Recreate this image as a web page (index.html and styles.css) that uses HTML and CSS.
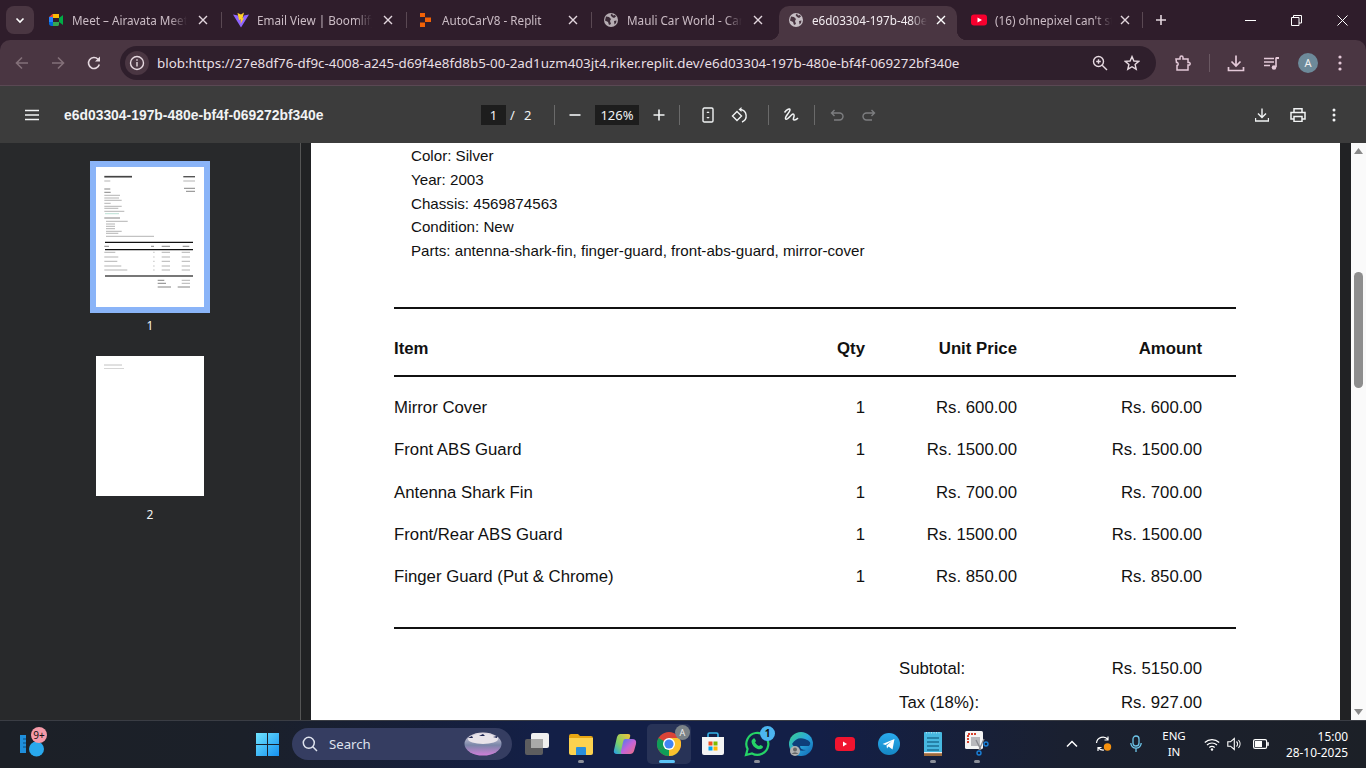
FILE: index.html
```html
<!DOCTYPE html>
<html lang="en">
<head>
<meta charset="utf-8">
<title>e6d03304-197b-480e-bf4f-069272bf340e</title>
<link rel="stylesheet" href="styles.css">
</head>
<body>
<div class="screen">
  <header class="tabstrip">
    <button class="tabsearch"><svg width="12" height="12" viewBox="0 0 12 12"><path d="M2.500 4.500 6 8l3.500-3.500" fill="none" stroke="#fff" stroke-width="1.600"/></svg></button>
    <div class="tab">
      <svg class="fav" width="16" height="16" viewBox="0 0 16 16"><path d="M1 5 4.500 2H11v4H5v4H1z" fill="#ea4335"/><path d="M1 5h4v6H1z" fill="#2684fc"/><path d="M5 2h6v4H5z" fill="#fbbc04"/><path d="M1 10h4v4H3.500C2 14 1 13 1 11.500z" fill="#0066da"/><path d="M5 10h6v2.500C11 13.500 10 14 9 14H5z" fill="#34a853"/><path d="M11 6 15 3v10l-4-3z" fill="#00ac47"/></svg>
      <span class="tabtext">Meet – Airavata Meet</span>
      <svg class="x" width="10" height="10" viewBox="0 0 10 10"><path d="M1 1l8 8M9 1 1 9" stroke="#e3d6de" stroke-width="1.400"/></svg>
    </div>
    <div class="tab">
      <svg class="fav" width="16" height="16" viewBox="0 0 16 16"><path d="M0 2.500 8 15.500 16 2.500 11 3.500 8 8.500 5 3.500z" fill="#8f65ff"/><path d="M4.500 1 8 2.500 11 .5 9.500 6.500 11 6 7.500 12 8 7.500 6 8z" fill="#ffd028"/></svg>
      <span class="tabtext">Email View | Boomlify</span>
      <svg class="x" width="10" height="10" viewBox="0 0 10 10"><path d="M1 1l8 8M9 1 1 9" stroke="#e3d6de" stroke-width="1.400"/></svg>
    </div>
    <div class="tab">
      <svg class="fav" width="16" height="16" viewBox="0 0 16 16"><path d="M2 1h5v4H2zM7 5.500h6v4.500H7zM2 10.500h5V15H2z" fill="#f26207"/></svg>
      <span class="tabtext">AutoCarV8 - Replit</span>
      <svg class="x" width="10" height="10" viewBox="0 0 10 10"><path d="M1 1l8 8M9 1 1 9" stroke="#e3d6de" stroke-width="1.400"/></svg>
    </div>
    <div class="tab tab-plain">
      <svg class="fav" width="16" height="16" viewBox="0 0 16 16"><circle cx="8" cy="8" r="7" fill="#b6adb3"/><path d="M3 4.500l3 .5 2 2-1 2 1 3-2 1-1-3-3-1.500zM9 1.500l1 2 2-.5 1 1.500-2 1.500-2-1-1.500-2zM11 9l2.500-.5-.5 2.500-1.500 1.500z" fill="#3a2a36"/></svg>
      <span class="tabtext">Mauli Car World - Car</span>
      <svg class="x" width="10" height="10" viewBox="0 0 10 10"><path d="M1 1l8 8M9 1 1 9" stroke="#e3d6de" stroke-width="1.400"/></svg>
    </div>
    <div class="tab tab-active">
      <svg class="fav" width="16" height="16" viewBox="0 0 16 16"><circle cx="8" cy="8" r="7" fill="#c8c0c6"/><path d="M3 4.500l3 .5 2 2-1 2 1 3-2 1-1-3-3-1.500zM9 1.500l1 2 2-.5 1 1.500-2 1.500-2-1-1.500-2zM11 9l2.500-.5-.5 2.500-1.500 1.500z" fill="#4a3642"/></svg>
      <span class="tabtext">e6d03304-197b-480e-bf4f</span>
      <svg class="x" width="10" height="10" viewBox="0 0 10 10"><path d="M1 1l8 8M9 1 1 9" stroke="#fff" stroke-width="1.400"/></svg>
    </div>
    <div class="tab tab-last">
      <svg class="fav" width="16" height="16" viewBox="0 0 16 16"><rect y="2.500" width="16" height="11" rx="3" fill="#f7002e"/><path d="M6.500 5.500v5L11 8z" fill="#fff"/></svg>
      <span class="tabtext">(16) ohnepixel can't stop</span>
      <svg class="x" width="10" height="10" viewBox="0 0 10 10"><path d="M1 1l8 8M9 1 1 9" stroke="#e3d6de" stroke-width="1.400"/></svg>
    </div>
    <svg class="newtab" width="12" height="12" viewBox="0 0 12 12"><path d="M6 1v10M1 6h10" stroke="#e3d6de" stroke-width="1.600"/></svg>
    <div class="winctl">
      <svg width="11" height="11" viewBox="0 0 11 11"><path d="M0 5.500h11" stroke="#fff"/></svg>
      <svg width="11" height="11" viewBox="0 0 11 11"><path d="M.5 2.500h7.500v8H.5zM2.500 2.500V.5h8v7.500H8" fill="none" stroke="#fff"/></svg>
      <svg width="11" height="11" viewBox="0 0 11 11"><path d="M.5.5l10 10M10.500.5l-10 10" stroke="#fff"/></svg>
    </div>
  </header>

  <nav class="toolbar">
    <svg class="nav-ic" width="16" height="16" viewBox="0 0 16 16"><path d="M14 8H2.500M8 2.500 2.500 8 8 13.500" fill="none" stroke="#837079" stroke-width="1.600"/></svg>
    <svg class="nav-ic" width="16" height="16" viewBox="0 0 16 16"><path d="M2 8h11.500M8 2.500 13.500 8 8 13.500" fill="none" stroke="#837079" stroke-width="1.600"/></svg>
    <svg class="nav-ic" width="16" height="16" viewBox="0 0 16 16"><path d="M13.300 9.500A5.500 5.500 0 1 1 12 4.200" fill="none" stroke="#e6d9e0" stroke-width="1.600"/><path d="M14 1.500v5H9z" fill="#e6d9e0"/></svg>
    <div class="omnibox">
      <span class="chip"><svg width="16" height="16" viewBox="0 0 16 16"><circle cx="8" cy="8" r="6.500" fill="none" stroke="#e6d9e0" stroke-width="1.400"/><path d="M8 7v4.500M8 4.300v1.400" stroke="#e6d9e0" stroke-width="1.400"/></svg></span>
      <span class="url">blob:https://27e8df76-df9c-4008-a245-d69f4e8fd8b5-00-2ad1uzm403jt4.riker.replit.dev/e6d03304-197b-480e-bf4f-069272bf340e</span>
      <svg class="omni-ic" width="16" height="16" viewBox="0 0 16 16"><circle cx="6.500" cy="6.500" r="5" fill="none" stroke="#e6d9e0" stroke-width="1.400"/><path d="M10.200 10.200 15 15M4.200 6.500h4.600M6.500 4.200v4.600" fill="none" stroke="#e6d9e0" stroke-width="1.400"/></svg>
      <svg class="omni-ic" width="16" height="16" viewBox="0 0 16 16"><path d="M8 1.600l1.900 4.400 4.800.4-3.600 3.100 1.100 4.700L8 11.700l-4.200 2.500 1.100-4.700-3.600-3.100 4.800-.4z" fill="none" stroke="#e6d9e0" stroke-width="1.400"/></svg>
    </div>
    <div class="tools">
      <svg width="18" height="18" viewBox="0 0 18 18"><path d="M2 5h4V3.500a1.500 1.500 0 0 1 3 0V5h5v3.500h1.500a1.500 1.500 0 0 1 0 2.500H14v5H3v-4.500h.5a2 2 0 0 0 0-3H2.500z" fill="none" stroke="#e4c9d8" stroke-width="1.500"/></svg>
      <i class="tsep"></i>
      <svg width="18" height="18" viewBox="0 0 18 18"><path d="M9 1.500v10M4.500 7.500 9 12l4.500-4.500M1.500 13v3.500h15V13" fill="none" stroke="#e4c9d8" stroke-width="1.700"/></svg>
      <svg class="media" width="16" height="16" viewBox="0 0 16 16"><path d="M0 3.500h10M0 7h10M0 10.500h6" stroke="#e4c9d8" stroke-width="1.400"/><path d="M12 2.500V12" stroke="#e4c9d8" stroke-width="1.600"/><path d="M12 2h3v2h-3z" fill="#e4c9d8"/><circle cx="10" cy="12.500" r="2.300" fill="#e4c9d8"/></svg>
      <span class="avatar">A</span>
      <svg width="4" height="16" viewBox="0 0 4 16"><circle cx="2" cy="2" r="1.600" fill="#e4c9d8"/><circle cx="2" cy="8" r="1.600" fill="#e4c9d8"/><circle cx="2" cy="14" r="1.600" fill="#e4c9d8"/></svg>
    </div>
  </nav>

  <section class="pdfbar">
    <svg class="menu" width="16" height="12" viewBox="0 0 16 12"><path d="M1 1.500h14M1 6h14M1 10.500h14" stroke="#f1f3f4" stroke-width="1.500"/></svg>
    <span class="doctitle">e6d03304-197b-480e-bf4f-069272bf340e</span>
    <div class="pdfmid">
      <span class="pageinput">1</span><span class="slash">/</span><span class="pagecount">2</span>
      <i class="psep sep-a"></i>
      <svg class="zb" width="12" height="12" viewBox="0 0 12 12"><path d="M.5 6h11" stroke="#f1f3f4" stroke-width="1.600"/></svg>
      <span class="zoominput">126%</span>
      <svg class="zb" width="12" height="12" viewBox="0 0 12 12"><path d="M.5 6h11M6 .5v11" stroke="#f1f3f4" stroke-width="1.600"/></svg>
      <i class="psep sep-b"></i>
      <svg class="fit" width="12" height="16" viewBox="0 0 12 16"><rect x="1" y="1" width="10" height="14" rx="1.300" fill="none" stroke="#f1f3f4" stroke-width="1.400"/><path d="M4.300 6 6 4.200 7.700 6zM4.300 10 6 11.800 7.700 10z" fill="#f1f3f4"/></svg>
      <svg class="rot" width="18" height="18" viewBox="0 0 18 18"><path d="M1.500 10 6 5.500l4.500 4.500L6 14.500z" fill="none" stroke="#f1f3f4" stroke-width="1.400"/><path d="M9.500 3.500a6.500 6.500 0 0 1 1.500 12.500" fill="none" stroke="#f1f3f4" stroke-width="1.400"/><path d="M10.500 1v5L7.500 3.500z" fill="#f1f3f4"/></svg>
      <i class="psep sep-c"></i>
      <svg class="draw" width="16" height="16" viewBox="0 0 16 16"><path d="M1.500 5.500C4 2 7 1 7 3c0 2.500-5 6-4.500 8.500S6.500 10 8.500 8s3 -.5 2.500 1.500-1.500 3.500.5 3.500 3-1.500 3.500-2" fill="none" stroke="#f1f3f4" stroke-width="1.500"/></svg>
      <i class="psep sep-d"></i>
      <svg class="undo" width="14" height="14" viewBox="0 0 14 14"><path d="M4.500 2 1.500 5l3 3M1.500 5h8a3.500 3.500 0 0 1 0 7H4" fill="none" stroke="#7d7e80" stroke-width="1.400"/></svg>
      <svg class="redo" width="14" height="14" viewBox="0 0 14 14"><path d="M9.500 2l3 3-3 3M12.500 5h-8a3.500 3.500 0 0 0 0 7H10" fill="none" stroke="#7d7e80" stroke-width="1.400"/></svg>
    </div>
    <div class="pdfright">
      <svg class="pdl" width="14" height="14" viewBox="0 0 14 14"><path d="M7 .5v8.500M3 5.500 7 9.500l4-4M.5 10v3h13v-3" fill="none" stroke="#f1f3f4" stroke-width="1.400"/></svg>
      <svg width="16" height="14" viewBox="0 0 16 14"><path d="M4 4V.8h8V4M4 11H1V4.500h14V11h-3M4 8.500h8v5H4z" fill="none" stroke="#f1f3f4" stroke-width="1.500"/></svg>
      <svg width="4" height="14" viewBox="0 0 4 14"><circle cx="2" cy="2" r="1.500" fill="#f1f3f4"/><circle cx="2" cy="7" r="1.500" fill="#f1f3f4"/><circle cx="2" cy="12" r="1.500" fill="#f1f3f4"/></svg>
    </div>
  </section>

  <main class="pdfmain">
    <aside class="thumbs">
      <figure class="thumb thumb-sel">
        <svg class="thumbpage" width="108" height="140" viewBox="0 0 108 140">
          <path d="M8.300 9.700H36" stroke="#444" stroke-width="1.700"/>
          <path d="M87.300 9.700H99" stroke="#555" stroke-width="1.400"/>
          <path d="M9 75.300H97M9 82.700H97" stroke="#111" stroke-width="1.200"/>
          <path d="M8.300 22h6M8.300 25.300h6.400M88 21.300h11M90 24.300h9M8.300 51h15.700M8.300 79.300h4.700M55 79.300h3M65.700 79.300h8.300M86.700 79.300h6.600M61.700 113.300h6.600M61.700 116.300h8.300M61.700 120h13.300M81.700 120h12.300" stroke="#777" stroke-width=".9"/>
          <path d="M8.300 14h6M87.300 14h11.700M8.300 28.300h15.700M8.300 31h14.700M8.300 33.300h17.400M8.300 36.300h6.400M8.300 39.300h17.400M8.300 41.300h14M8.300 44.300h20M10 54.300h21.700M10 57h9M10 59.300h9M10 61.700h9M10 64.300h15.700M10 66.300h12.300M10 69.300h48M8.300 85.300h11M8.300 90h14M8.300 94.300h13M8.300 99h17M8.300 103h23M57.300 85.300h1.200M57.300 90h1.200M57.300 94.300h1.200M57.300 99h1.200M57.300 103h1.200M65.700 85.300h8.300M65.700 90h8.300M65.700 94.300h8.300M65.700 99h8.300M65.700 103h8.300M85.700 85.300h8.300M85.700 90h8.300M85.700 94.300h8.300M85.700 99h8.300M85.700 103h8.300M85.700 113.300h8.300M85.700 116.300h8.300" stroke="#aaa" stroke-width=".9"/>
          <path d="M9 109H97" stroke="#777" stroke-width="1.800"/>
          <path d="M9 46.700h14" stroke="#a8d8c8" stroke-width=".8"/>
        </svg>
      </figure>
      <span class="thumbnum">1</span>
      <figure class="thumb">
        <svg class="thumbpage" width="108" height="140" viewBox="0 0 108 140">
          <path d="M8 9h18" stroke="#bbb" stroke-width=".9"/>
          <path d="M8 12.500h20" stroke="#ccc" stroke-width=".8"/>
        </svg>
      </figure>
      <span class="thumbnum">2</span>
    </aside>
    <div class="viewer">
      <article class="page">
        <div class="vehicle">
          <p>Color: Silver</p>
          <p>Year: 2003</p>
          <p>Chassis: 4569874563</p>
          <p>Condition: New</p>
          <p>Parts: antenna-shark-fin, finger-guard, front-abs-guard, mirror-cover</p>
        </div>
        <div class="items">
          <div class="row head"><span>Item</span><span class="r">Qty</span><span class="r">Unit Price</span><span class="r">Amount</span></div>
          <div class="body">
            <div class="row"><span>Mirror Cover</span><span class="r">1</span><span class="r">Rs. 600.00</span><span class="r">Rs. 600.00</span></div>
            <div class="row"><span>Front ABS Guard</span><span class="r">1</span><span class="r">Rs. 1500.00</span><span class="r">Rs. 1500.00</span></div>
            <div class="row"><span>Antenna Shark Fin</span><span class="r">1</span><span class="r">Rs. 700.00</span><span class="r">Rs. 700.00</span></div>
            <div class="row"><span>Front/Rear ABS Guard</span><span class="r">1</span><span class="r">Rs. 1500.00</span><span class="r">Rs. 1500.00</span></div>
            <div class="row"><span>Finger Guard (Put &amp; Chrome)</span><span class="r">1</span><span class="r">Rs. 850.00</span><span class="r">Rs. 850.00</span></div>
          </div>
          <div class="totals">
            <div class="total"><span>Subtotal:</span><span class="r">Rs. 5150.00</span></div>
            <div class="total"><span>Tax (18%):</span><span class="r">Rs. 927.00</span></div>
          </div>
        </div>
      </article>
    </div>
    <div class="scrollbar">
      <svg width="9" height="6" viewBox="0 0 9 6"><path d="M4.500 0 9 6H0z" fill="#8a8a8a"/></svg>
      <div class="thumbbar"></div>
      <svg width="9" height="6" viewBox="0 0 9 6"><path d="M4.500 6 9 0H0z" fill="#8a8a8a"/></svg>
    </div>
  </main>

  <footer class="taskbar">
    <div class="widget">
      <svg width="26" height="28" viewBox="0 0 26 28"><rect x="0" y="5" width="6" height="18" fill="#1f8fdc"/><path d="M3 9h3M3 13h3M3 17h3" stroke="#0b4d80"/><circle cx="16.500" cy="19" r="7.500" fill="#29a8ec"/></svg>
      <span class="badge-9">9+</span>
    </div>
    <svg class="winlogo" width="23" height="23" viewBox="0 0 23 23"><defs><linearGradient id="w" x1="0" y1="0" x2="1" y2="1"><stop offset="0" stop-color="#6fe4ff"/><stop offset="1" stop-color="#1590f0"/></linearGradient></defs><path d="M0 0h11v11H0zM12 0h11v11H12zM0 12h11v11H0zM12 12h11v11H12z" fill="url(#w)"/></svg>
    <div class="search">
      <svg width="16" height="16" viewBox="0 0 16 16"><circle cx="6.800" cy="6.800" r="5.500" fill="none" stroke="#dfe3ee" stroke-width="1.500"/><path d="M10.800 10.800 15 15" stroke="#dfe3ee" stroke-width="1.500"/></svg>
      <span class="searchtext">Search</span>
      <svg class="searchart" width="38" height="26" viewBox="0 0 38 26"><defs><linearGradient id="sa" x1="0" y1="0" x2="0" y2="1"><stop offset="0" stop-color="#e8dfe6"/><stop offset=".55" stop-color="#7a86a8"/><stop offset="1" stop-color="#d07fd8"/></linearGradient></defs><ellipse cx="19" cy="13" rx="18.500" ry="11.500" fill="url(#sa)"/><ellipse cx="19" cy="8" rx="15" ry="5" fill="#e9e4ea"/><path d="M4 7l4-2 1 2zM15 5l4-2 2 2zM29 6l4-1 0 2z" fill="#1b2350"/></svg>
    </div>
    <div class="apps">
      <div class="app"><svg width="26" height="24" viewBox="0 0 26 24"><rect x="1" y="7" width="18" height="16" rx="2" fill="#5d5d5f"/><rect x="7" y="1" width="18" height="15" rx="2" fill="#efefef"/><rect x="7" y="7" width="12" height="9" fill="#a9a9a9"/></svg></div>
      <div class="app dot"><svg width="24" height="22" viewBox="0 0 24 22"><path d="M0 3q0-2 2-2h7l2 2h11q2 0 2 2v3H0z" fill="#e8a613"/><path d="M0 5h24v15q0 2-2 2H2q-2 0-2-2z" fill="#fcd24f"/><path d="M7 15q0-1 1-1h8q1 0 1 1v7H7z" fill="#2a8fdc"/></svg></div>
      <div class="app"><svg width="24" height="22" viewBox="0 0 24 22"><defs><linearGradient id="co1" x1="0" y1="1" x2="1" y2="0"><stop offset="0" stop-color="#1e9cf0"/><stop offset=".4" stop-color="#7bd06a"/><stop offset="1" stop-color="#f7c338"/></linearGradient><linearGradient id="co2" x1="0" y1="0" x2="1" y2="1"><stop offset="0" stop-color="#3f7df0"/><stop offset=".5" stop-color="#c463d8"/><stop offset="1" stop-color="#f0707a"/></linearGradient></defs><path d="M7 1h8q3 0 2 3L13 18q-1 3-4 3H4q-4 0-3-4L4 4q1-3 3-3z" fill="url(#co1)"/><path d="M12 6h7q5 0 4 5l-2 7q-1 3-4 3h-7q-3 0-2-3l2-9q.5-3 2-3z" fill="url(#co2)"/></svg></div>
      <div class="app app-active">
        <svg width="24" height="24" viewBox="0 0 24 24"><circle cx="12" cy="12" r="12" fill="#db4437"/><path d="M12 12 1.600 18A12 12 0 0 1 1.600 6z" fill="#0f9d58"/><path d="M12 12 1.600 18A12 12 0 0 0 12 24a12 12 0 0 0 10.400-6z" fill="#0f9d58"/><path d="M12 12 12 24A12 12 0 0 0 22.400 6H12z" fill="#fbc02d"/><circle cx="12" cy="12" r="6" fill="#fff"/><circle cx="12" cy="12" r="4.600" fill="#4285f4"/></svg>
        <span class="chrome-a">A</span>
      </div>
      <div class="app"><svg width="24" height="24" viewBox="0 0 24 24"><path d="M7 5V2.500Q7 1 8.500 1h7Q17 1 17 2.500V5" fill="none" stroke="#35b4e8" stroke-width="1.600"/><path d="M1 5h22v16q0 2-2 2H3q-2 0-2-2z" fill="#f4f4f4"/><path d="M7.500 9.500h4v4h-4z" fill="#f25022"/><path d="M12.500 9.500h4v4h-4z" fill="#7fba00"/><path d="M7.500 14.500h4v4h-4z" fill="#00a4ef"/><path d="M12.500 14.500h4v4h-4z" fill="#ffb900"/></svg></div>
      <div class="app dot"><svg width="26" height="26" viewBox="0 0 26 26"><path d="M2 24l1.600-6A11 11 0 1 1 8 22.500z" fill="none" stroke="#25d366" stroke-width="2.200"/><path d="M9 8q1-1.500 2 0l1 2-1 1.500q1.500 2.500 4 3.500l1.500-1 2 1q1 1 0 2-2 2-5 1-5-2-6-7-.2-2 1.500-3z" fill="#25d366"/></svg><span class="badge-1">1</span></div>
      <div class="app"><svg width="24" height="24" viewBox="0 0 24 24"><defs><linearGradient id="ed" x1="0" y1="0" x2="1" y2="1"><stop offset="0" stop-color="#3bd28a"/><stop offset=".5" stop-color="#2aa7dc"/><stop offset="1" stop-color="#0f62b0"/></linearGradient></defs><circle cx="12" cy="12" r="12" fill="url(#ed)"/><path d="M3 12Q8 4 16 7t4 7h-9q0 4 6 4-8 3-14-6z" fill="#0e3f7a"/><circle cx="6" cy="19" r="5" fill="#b0b0b0"/><circle cx="6" cy="17.500" r="2" fill="#666"/><path d="M2.500 22q3.500-3.500 7 0" fill="#666"/></svg></div>
      <div class="app"><svg width="20" height="14" viewBox="0 0 20 14"><rect width="20" height="14" rx="3.500" fill="#f0142f"/><path d="M8 4.500v5L12 7z" fill="#fff"/></svg></div>
      <div class="app"><svg width="22" height="22" viewBox="0 0 22 22"><defs><linearGradient id="tg" x1="0" y1="0" x2="0" y2="1"><stop offset="0" stop-color="#2aabee"/><stop offset="1" stop-color="#1587c4"/></linearGradient></defs><circle cx="11" cy="11" r="11" fill="url(#tg)"/><path d="M4.500 11 16.500 6 14.500 16.500 10.500 13.500 9 15.500 8.500 12.500 14 8 7.500 12z" fill="#fff"/></svg></div>
      <div class="app dot"><svg width="18" height="24" viewBox="0 0 18 24"><rect width="18" height="24" rx="1" fill="#47b8e0"/><rect y="20" width="18" height="4" fill="#a06a3a"/><rect y="20" width="18" height="1.200" fill="#eee"/><path d="M3 6h12M3 10h12M3 14h12M3 18h12" stroke="#1c6f94" stroke-width="1.300"/><path d="M2 .8h14" stroke="#d8f0f8" stroke-dasharray="1 1.500"/></svg></div>
      <div class="app dot"><svg width="24" height="26" viewBox="0 0 24 26"><rect x="0" y="0" width="18" height="18" rx="1.500" fill="#f4f4f4"/><path d="M3 12V3h9" fill="none" stroke="#d8402c" stroke-width="2" stroke-dasharray="2 1"/><rect x="6" y="6" width="9" height="9" fill="#b8b8bc"/><path d="M11 9 16 19M19 8l-5 11" stroke="#8a8a90" stroke-width="1.400"/><circle cx="14" cy="22" r="2" fill="none" stroke="#1a80d8" stroke-width="1.400"/><circle cx="21" cy="13" r="2" fill="none" stroke="#1a80d8" stroke-width="1.400"/></svg></div>
    </div>
    <div class="tray">
      <svg class="tr-up" width="12" height="8" viewBox="0 0 12 8"><path d="M1 6.500 6 1.500l5 5" fill="none" stroke="#fff" stroke-width="1.500"/></svg>
      <svg class="tr-sync" width="18" height="18" viewBox="0 0 18 18"><path d="M1.500 8A6.500 6.500 0 0 1 13 4.500M13 1.500v3.500H9.500M3 16v-3.500h3.500M3.500 13A6.500 6.500 0 0 0 9 15" fill="none" stroke="#fff" stroke-width="1.200"/><circle cx="12.500" cy="12" r="3.700" fill="#f7920f"/></svg>
      <svg class="tr-mic" width="12" height="18" viewBox="0 0 12 18"><rect x="3" y="1" width="6" height="10" rx="3" fill="none" stroke="#6ec6ea" stroke-width="1.300"/><path d="M.8 8a5.200 5.200 0 0 0 10.400 0M6 13.500V17" fill="none" stroke="#6ec6ea" stroke-width="1.300"/></svg>
      <div class="lang"><span>ENG</span><span>IN</span></div>
      <svg class="tr-wifi" width="16" height="13" viewBox="0 0 16 13"><path d="M.8 4.500a10.500 10.500 0 0 1 14.400 0M3 7a7.300 7.300 0 0 1 10 0M5.300 9.500a4 4 0 0 1 5.400 0" fill="none" stroke="#fff" stroke-width="1.200"/><circle cx="8" cy="11.500" r="1.200" fill="#fff"/></svg>
      <svg class="tr-vol" width="16" height="14" viewBox="0 0 16 14"><path d="M.8 4.800h2.700L7.300 1.500v11L3.500 9.200H.8z" fill="none" stroke="#fff" stroke-width="1.100"/><path d="M9.500 4.500a3.500 3.500 0 0 1 0 5M11.500 3a6 6 0 0 1 0 8" fill="none" stroke="#fff" stroke-width="1.100"/></svg>
      <svg class="tr-bat" width="16" height="10" viewBox="0 0 16 10"><rect x=".6" y=".6" width="13" height="8.800" rx="1.500" fill="none" stroke="#fff" stroke-width="1.200"/><rect x="2" y="2" width="7" height="6" fill="#fff"/><rect x="14.200" y="3.200" width="1.600" height="3.600" fill="#fff"/></svg>
      <div class="clock"><span>15:00</span><span>28-10-2025</span></div>
    </div>
  </footer>
</div>
</body>
</html>
```

FILE: styles.css
```css
* { box-sizing: border-box; }
html, body { margin: 0; padding: 0; width: 1366px; height: 768px; overflow: hidden; }
body { font-family: "Noto Sans", "Open Sans", sans-serif; background: #2f1d2b; }
p, figure { margin: 0; }
svg { display: block; flex: none; }
button { border: 0; padding: 0; }

.screen { display: flex; flex-direction: column; width: 1366px; height: 768px; }

/* tab strip */
.tabstrip { display: flex; align-items: flex-start; height: 40px; background: #2f1d2b; padding-left: 6px; flex: none; position: relative; z-index: 1; }
.tabsearch { width: 28px; height: 28px; margin-top: 6px; margin-right: 3px; border-radius: 8px; background: #4a3642; display: flex; align-items: center; justify-content: center; }
.tab { position: relative; width: 185px; height: 34px; margin-top: 6px; display: flex; align-items: center; padding: 0 0 6px 11px; color: #cbbcc5; font-size: 11.7px; }
.tab::after { content: ""; position: absolute; right: 0; top: 6px; height: 16px; width: 1px; background: #5a4853; }
.tab-plain::after { display: none; }
.tabtext { margin-left: 8px; width: 115px; white-space: nowrap; overflow: hidden; -webkit-mask-image: linear-gradient(90deg, #000 85%, transparent); mask-image: linear-gradient(90deg, #000 85%, transparent); }
.x { margin-left: 11px; }
.tab-active { background: #4a3642; color: #f3edf1; border-radius: 10px 10px 0 0; width: 178px; margin-left: 2px; margin-right: 5px; padding-left: 9px; }
.tab-active::before { content: ""; position: absolute; right: -10px; bottom: 0; width: 10px; height: 10px; background: radial-gradient(circle at 100% 0, transparent 10px, #4a3642 10.5px); }
.tab-active::after { right: auto; left: -10px; top: auto; bottom: 0; width: 10px; height: 10px; background: radial-gradient(circle at 0 0, transparent 10px, #4a3642 10.5px); }
.tab-active .x { margin-left: 9px; }
.tab-last { padding-left: 9px; width: 181px; }
.tab-last .x { margin-left: 8px; }
.tab-last .tabtext { margin-left: 8px; width: 117px; }
.tab-last::after { right: 0; }
.newtab { margin: 14px 0 0 12px; }
.winctl { display: flex; gap: 35px; margin: 15px 0 0 auto; padding-right: 18px; }
.winctl svg { width: 11px; }

/* browser toolbar */
.toolbar { height: 46px; flex: none; display: flex; align-items: center; background: #4a3642; border-radius: 10px 10px 0 0; padding-left: 14px; border-bottom: 1px solid #5a4853; position: relative; }
.nav-ic { margin-right: 20px; }
.omnibox { display: flex; align-items: center; width: 1036px; height: 34px; margin-left: -2px; border-radius: 17px; background: #2f1f2c; padding-left: 5px; }
.chip { width: 24px; height: 24px; border-radius: 50%; background: #4a3642; display: flex; align-items: center; justify-content: center; flex: none; }
.url { margin-left: 8px; width: 935px; flex: none; font-size: 13.38px; color: #e8dfe4; white-space: nowrap; overflow: hidden; }
.omni-ic { margin-right: 16px; }
.tools { display: flex; align-items: center; margin-left: 18px; }
.tsep { width: 1px; height: 18px; background: #6a5862; margin: 0 17px 0 17px; }
.media { margin-left: 19px; }
.avatar { width: 20px; height: 20px; border-radius: 50%; background: #6d8a9a; color: #f0f0f0; font-size: 11px; display: flex; align-items: center; justify-content: center; margin: 0 20px 0 18px; }

/* pdf toolbar */
.pdfbar { height: 57px; flex: none; display: flex; align-items: center; background: #3c3c3c; padding-left: 24px; color: #f1f3f4; }
.doctitle { margin-left: 24px; width: 417px; font: 700 13.9px "Liberation Sans", sans-serif; white-space: nowrap; }
.pdfmid { display: flex; align-items: center; font-size: 13px; }
.pageinput { width: 25px; height: 20px; background: #1d1d1d; text-align: center; line-height: 20px; }
.slash { margin-left: 4px; width: 14px; text-align: left; }
.pagecount { width: 11px; }
.psep { width: 1px; height: 20px; background: #6a6a6a; }
.sep-a { margin-left: 19px; }
.zb { margin-left: 14px; }
.zoominput { width: 44px; height: 20px; margin-left: 14px; background: #1d1d1d; text-align: center; line-height: 20px; }
.sep-b { margin-left: 14px; }
.fit { margin-left: 22px; }
.rot { margin-left: 17px; }
.sep-c { margin-left: 19px; }
.draw { margin-left: 14px; }
.sep-d { margin-left: 15px; }
.undo { margin-left: 15px; }
.redo { margin-left: 18px; }
.pdfright { display: flex; align-items: center; margin-left: auto; padding-right: 30px; gap: 26px; }
.pdl { margin-right: -5px; }

/* main area */
.pdfmain { flex: 1; min-height: 0; display: flex; background: #212224; overflow: hidden; }
.thumbs { width: 301px; flex: none; background: #28292b; border-right: 1px solid #555; display: flex; flex-direction: column; align-items: center; padding-top: 18px; }
.thumb { padding: 6px; }
.thumb-sel { background: #8ab4f8; }
.thumbpage { background: #fff; }
.thumbnum { color: #f1f3f4; font-size: 12px; line-height: 16px; margin: 5px 0 16px; }
.viewer { flex: 1; min-width: 0; padding-left: 10px; padding-right: 11px; }
.page { height: 100%; background: #fff; overflow: hidden; padding-left: 83px; padding-right: 104px; color: #111; font-family: "Liberation Sans", Arial, sans-serif; }
.vehicle { padding-left: 17px; font-size: 15.15px; line-height: 23.75px; padding-top: 1px; height: 166px; border-bottom: 2px solid #111; }
.row { display: grid; grid-template-columns: 1fr 60px 152px 185px; padding-right: 34px; height: 42.3px; align-items: center; font-size: 16.75px; }
.r { text-align: right; }
.head { font-weight: 700; height: 68px; border-bottom: 2px solid #111; padding-top: 14px; }
.body { padding: 10px 0 29px; border-bottom: 2px solid #111; }
.totals { padding-top: 23px; }
.total { display: flex; justify-content: space-between; padding: 0 34px 0 505px; height: 34px; font-size: 16.75px; align-items: center; }
.scrollbar { width: 15px; flex: none; background: #fafafa; display: flex; flex-direction: column; align-items: center; padding: 5px 0; }
.thumbbar { width: 9px; height: 116px; margin: 118px 0 auto; border-radius: 5px; background: #8e8e8e; }

/* taskbar */
.taskbar { height: 48px; flex: none; display: flex; align-items: center; color: #fff; background: linear-gradient(90deg, #1c2027 0%, #1b2029 18%, #131f47 40%, #131f47 60%, #1a2030 78%, #1c2027 100%); box-shadow: inset 0 1px 0 #3a3d44; }
.widget { position: relative; width: 245px; padding-left: 20px; height: 100%; display: flex; align-items: center; }
.badge-9 { position: absolute; left: 31px; top: 7px; width: 16px; height: 16px; border-radius: 50%; background: #f59aa8; color: #111; font-size: 10px; line-height: 16px; text-align: center; }
.winlogo { margin: 0 13px 0 11px; }
.search { display: flex; align-items: center; width: 220px; height: 32px; border-radius: 16px; background: #353d61; padding-left: 10px; color: #dfe3ee; font-size: 13.2px; }
.searchtext { margin-left: 11px; }
.searchart { margin-left: auto; margin-right: 10px; }
.apps { display: flex; margin-left: 3px; }
.app { position: relative; width: 44px; height: 40px; display: flex; align-items: center; justify-content: center; }
.app.dot::after { content: ""; position: absolute; bottom: 1px; left: 19px; width: 6px; height: 3px; border-radius: 2px; background: #8b8f99; }
.app-active { background: rgba(255,255,255,.09); border-radius: 5px; }
.app-active::after { content: ""; position: absolute; bottom: 1px; left: 12px; width: 16px; height: 3px; border-radius: 2px; background: #5cc4f6; }
.chrome-a { position: absolute; top: 1px; right: 1px; width: 15px; height: 15px; border-radius: 50%; background: #7b8388; color: #eee; font-size: 9px; line-height: 15px; text-align: center; }
.badge-1 { position: absolute; top: 2px; right: 4px; width: 15px; height: 15px; border-radius: 50%; background: #4cb5f0; color: #111; font-size: 10px; font-weight: 700; line-height: 15px; text-align: center; }
.tray { display: flex; align-items: center; margin-left: 67px; }
.tr-sync { margin-left: 17px; }
.tr-mic { margin-left: 17px; }
.lang { display: flex; flex-direction: column; align-items: center; font-size: 11.5px; line-height: 16px; width: 36px; margin-left: 14px; }
.tr-wifi { margin-left: 12px; }
.tr-vol { margin-left: 7px; }
.tr-bat { margin-left: 10px; }
.clock { display: flex; flex-direction: column; align-items: flex-end; font-size: 11.9px; line-height: 16px; width: 64px; margin-left: 15px; }
```
